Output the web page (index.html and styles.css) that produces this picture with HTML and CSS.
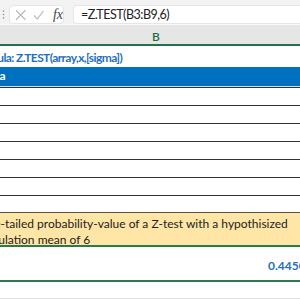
FILE: index.html
```html
<!DOCTYPE html>
<html lang="en">
  <head>
    <meta charset="UTF-8" />
    <title>Z.TEST</title>
    <link rel="stylesheet" href="styles.css">
  </head>
  <body>
    <!-- Formula bar -->
    <div class="formula-bar">
      <svg class="grip" width="4" height="19" viewBox="0 0 4 19">
        <circle cx="1" cy="6" r="0.8" fill="#888" />
        <circle cx="1" cy="9.5" r="0.8" fill="#888" />
        <circle cx="1" cy="13" r="0.8" fill="#888" />
      </svg>
      <div class="fx-box">
        <svg class="ico" width="12" height="12" viewBox="0 0 12 12">
          <path d="M1 1 L11 11 M11 1 L1 11" stroke="#b9b9b9" stroke-width="1.2" fill="none" />
        </svg>
        <svg class="ico" width="12" height="12" viewBox="0 0 12 12">
          <path d="M1 6.5 L4.5 10 L11 2" stroke="#b9b9b9" stroke-width="1.2" fill="none" />
        </svg>
        <span class="fx">fx</span>
      </div>
      <div class="formula-input">=Z.TEST(B3:B9,6)</div>
    </div>

    <!-- Column header -->
    <div class="col-head">
      <span class="col-name">B</span>
    </div>

    <!-- Sheet -->
    <div class="sheet">
      <div class="cell title"><span>Formula: Z.TEST(array,x,[sigma])</span></div>
      <div class="cell head"><span>Data</span></div>
      <div class="rows">
        <div class="row"></div>
        <div class="row"></div>
        <div class="row"></div>
        <div class="row"></div>
        <div class="row"></div>
        <div class="row"></div>
      </div>
      <div class="spacer"></div>
      <div class="note">
        <p>One-tailed probability-value of a Z-test with a hypothisized population mean of 6</p>
      </div>
      <div class="cell result"><span>0.4450</span></div>
      <div class="blank"></div>
    </div>
  </body>
</html>
```

FILE: styles.css
```css
* {
  margin: 0;
  padding: 0;
  box-sizing: border-box;
}

body {
  width: 300px;
  height: 300px;
  overflow: hidden;
  background: #f3f3f3;
  font-family: Lato, "Open Sans", sans-serif;
  color: #222;
}

/* Formula bar */
.formula-bar {
  height: 25px;
  display: flex;
  align-items: flex-start;
  padding-top: 5px;
  background: #f3f3f3;
  border-bottom: 1px solid #fafafa;
}

.grip {
  width: 9px;
}

.fx-box {
  width: 55px;
  height: 19px;
  background: #fff;
  border: 1px solid #e6e6e6;
  border-radius: 4px;
  display: flex;
  align-items: center;
  gap: 7px;
  padding-left: 5px;
}

.fx {
  font-family: "Liberation Serif", serif;
  font-style: italic;
  font-size: 14px;
  color: #444;
  margin-left: 1px;
}

.formula-input {
  flex: 1;
  height: 19px;
  margin-left: 9px;
  background: #fff;
  border: 1px solid #e6e6e6;
  border-right: none;
  border-radius: 4px 0 0 4px;
  padding-left: 7px;
  font-size: 12.5px;
  letter-spacing: -0.5px;
  line-height: 17px;
  color: #222;
}

/* Column header */
.col-head {
  height: 21px;
  background: #e6e6e6;
  border-bottom: 2px solid #217346;
  padding-left: 152px;
}

.col-name {
  font-size: 12px;
  line-height: 19px;
  color: #1e6b43;
  font-weight: 600;
}

/* Sheet */
.sheet {
  background: #fff;
  height: 254px;
  overflow: hidden;
  font-size: 12px;
}

.cell {
  overflow: hidden;
  white-space: nowrap;
}

.title {
  height: 21px;
  font-weight: 700;
  line-height: 23px;
  color: #1f6fc2;
  letter-spacing: -0.6px;
  text-indent: -28px;
}

.head {
  height: 20px;
  background: #0070c0;
  color: #fff;
  font-weight: 700;
  line-height: 18px;
  text-indent: -20px;
  border-bottom: 1px solid #d8d8d8;
}

.rows {
  border-bottom: 1px solid #333;
}

.row {
  height: 18px;
  border-top: 1px solid #333;
}

.spacer {
  height: 16px;
}

.note {
  height: 35px;
  background: #ffe6a6;
  border-top: 1px solid #5b5340;
  border-bottom: 2px solid #2b7a4b;
  overflow: hidden;
}

.note p {
  width: 330px;
  margin-left: -22px;
  line-height: 16px;
  padding-top: 3px;
}

.result {
  height: 35px;
  border-bottom: 2px solid #2b7a4b;
  font-weight: 700;
  color: #1f6fc2;
  line-height: 37px;
  padding-left: 268px;
}

.blank {
  height: 17px;
  border-bottom: 1px solid #e0e0e0;
}
```
